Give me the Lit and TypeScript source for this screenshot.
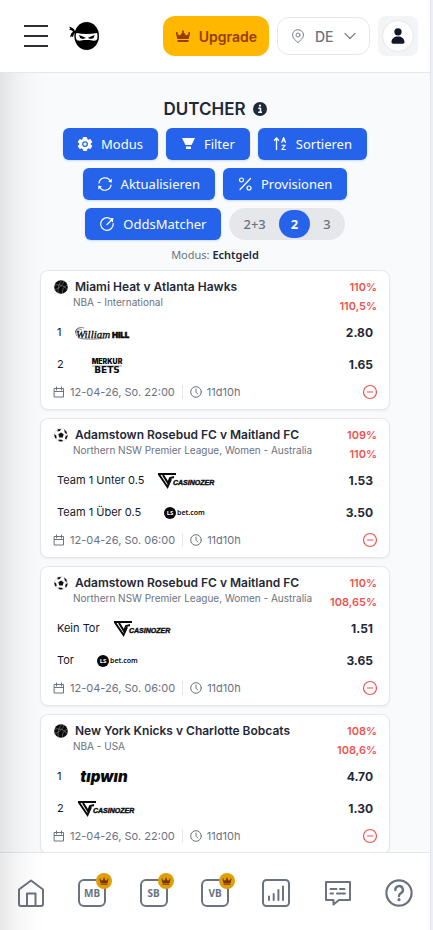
import { LitElement, html, css, svg } from "lit";
import { customElement, property, state } from "lit/decorators.js";
import { classMap } from "lit/directives/class-map.js";

type Brand = "williamhill" | "merkur" | "casinozer" | "lsbet" | "tipwin";
interface Leg { label: string; brand: Brand; odds: string; }
interface Match {
  sport: "basketball" | "soccer";
  title: string;
  league: string;
  ratings: [string, string];
  legs: Leg[];
  date: string;
  left: string;
}

const matches: Match[] = [
  {
    sport: "basketball", title: "Miami Heat v Atlanta Hawks", league: "NBA - International",
    ratings: ["110%", "110,5%"],
    legs: [{ label: "1", brand: "williamhill", odds: "2.80" }, { label: "2", brand: "merkur", odds: "1.65" }],
    date: "12-04-26, So. 22:00", left: "11d10h",
  },
  {
    sport: "soccer", title: "Adamstown Rosebud FC v Maitland FC", league: "Northern NSW Premier League, Women - Australia",
    ratings: ["109%", "110%"],
    legs: [{ label: "Team 1 Unter 0.5", brand: "casinozer", odds: "1.53" }, { label: "Team 1 Über 0.5", brand: "lsbet", odds: "3.50" }],
    date: "12-04-26, So. 06:00", left: "11d10h",
  },
  {
    sport: "soccer", title: "Adamstown Rosebud FC v Maitland FC", league: "Northern NSW Premier League, Women - Australia",
    ratings: ["110%", "108,65%"],
    legs: [{ label: "Kein Tor", brand: "casinozer", odds: "1.51" }, { label: "Tor", brand: "lsbet", odds: "3.65" }],
    date: "12-04-26, So. 06:00", left: "11d10h",
  },
  {
    sport: "basketball", title: "New York Knicks v Charlotte Bobcats", league: "NBA - USA",
    ratings: ["108%", "108,6%"],
    legs: [{ label: "1", brand: "tipwin", odds: "4.70" }, { label: "2", brand: "casinozer", odds: "1.30" }],
    date: "12-04-26, So. 22:00", left: "11d10h",
  },
];

const icon = (size: number, body: unknown, box = `0 0 ${size} ${size}`) =>
  html`<svg width=${size} height=${size} viewBox=${box} fill="none" stroke="currentColor" stroke-linecap="round" stroke-linejoin="round" aria-hidden="true">${body}</svg>`;

const crown = svg`<path stroke="none" fill="currentColor" d="M.8 5a1 1 0 1 1 1.500.9L5 7.600 7.300 4.300a1.100 1.100 0 1 1 1.400 0L11 7.600l2.700-1.700a1 1 0 1 1 1.500-.9L13.600 11H2.400zM2.400 12h11.200v1a1 1 0 0 1-1 1H3.400a1 1 0 0 1-1-1z"/>`;

const icons = {
  menu: icon(24, svg`<path stroke-width="2" stroke-linecap="butt" d="M0 2h24M0 12h24M0 22h24"/>`),
  crown: icon(16, crown),
  pin: icon(14, svg`<path d="M7 13.500C4.600 11.500 1.500 9 1.500 6a5.500 5.300 0 0 1 11 0C12.500 9 9.400 11.500 7 13.500z"/><circle cx="7" cy="6" r="2"/>`),
  chevron: icon(12, svg`<path stroke-width="1.200" d="M1 3.500l5 5 5-5"/>`),
  person: icon(16, svg`<g fill="currentColor" stroke="none"><circle cx="8" cy="4.300" r="4.100"/><path d="M.7 16c0-4 3.300-6.300 7.300-6.300s7.300 2.300 7.300 6.300c0 1.100-.8 1.600-2 1.600H2.700c-1.200 0-2-.5-2-1.600z"/></g>`, "0 0 16 18"),
  info: icon(14, svg`<circle cx="7" cy="7" r="7" fill="currentColor" stroke="none"/><circle cx="7" cy="3.700" r="1.100" fill="#fff" stroke="none"/><path stroke="#fff" stroke-width="1.500" stroke-linecap="butt" d="M5.300 6.300h2.200v4M5.200 10.300h3.800"/>`),
  gear: icon(16, svg`<path fill="currentColor" stroke-width="1" d="M6.500 1.500h3l.5 2 1.300.7 2-.6 1.500 2.600L13.300 7.600v1l1.500 1.300-1.500 2.600-2-.6-1.300.8-.5 1.800h-3L6 12.700l-1.300-.8-2 .6-1.500-2.600 1.500-1.300v-1L1.200 6.200l1.500-2.600 2 .6L6 3.500z"/><circle cx="8" cy="8.100" r="2.300" stroke="#2563eb" stroke-width="1.300"/>`),
  filter: icon(16, svg`<path fill="currentColor" stroke="none" d="M2 2h13l-3.500 7H5.500zM6 10.400h5V13H6z"/>`),
  sort: icon(16, svg`<path stroke-width="1.300" d="M4.500 13.500V2M2.500 4.200L4.500 2l2 2.200"/><path stroke-width="1.100" d="M9.700 6.500l1.900-5 1.900 5M10.300 5h2.600M9.900 9.200h3.300l-3.300 4.300h3.500"/>`),
  refresh: icon(16, svg`<path stroke-width="1.200" d="M2 7A6 6 0 0 1 13.400 5.300M14 9.200A6 6 0 0 1 2.700 10.900"/><path fill="currentColor" stroke="none" d="M14.800 2.600v4l-3.600-.8zM1.300 13.600v-4l3.600.8z"/>`),
  percent: icon(16, svg`<path stroke-width="1.200" d="M3 13.500L13.500 2.500"/><circle cx="4.500" cy="4" r="2" stroke-width="1.200"/><circle cx="12" cy="12" r="2" stroke-width="1.200"/>`),
  meter: icon(16, svg`<path stroke-width="1.200" d="M10.500 2.300A6.300 6.300 0 1 0 14.200 7.500M8 8.500L13.400 3.200M10.700 2.800l3-.2-.3 3"/>`),
  calendar: icon(12, svg`<path stroke-width="1" stroke-linejoin="miter" d="M1.500 2.500h9v8.500h-9zM1.500 5.500h9M3.500 1v3M8.500 1v3"/>`),
  clock: icon(12, svg`<circle cx="6" cy="6" r="5.300"/><path d="M6 3v3.200l1.800 1.800"/>`),
  minus: icon(16, svg`<circle cx="8" cy="8" r="6.500" stroke-width="1.200"/><path stroke-width="1.600" opacity=".7" d="M5.500 8h5"/>`),
  basketball: icon(14, svg`<circle cx="7" cy="7" r="6.800" fill="#0a0a0a" stroke="none"/><g stroke="#8b8b8b" stroke-width=".6"><path d="M1 9.600C5 8.500 9 5 10 1M.6 5.200C5 4 10 5.500 13.200 9.600M4.200 13C3.600 8.500 4.500 4 7.500.6M8.500 13.400C8 9.500 9.500 6.500 13.300 5.200"/></g>`),
  soccer: icon(14, svg`<circle cx="7" cy="7" r="6.500" fill="#fff" stroke="#c8c8c8" stroke-width=".6"/><g fill="#111" stroke="none"><path d="M7 4.500l2.700 1.800-1 3.200H5.300l-1-3.200zM3.800 1.300L7 1 5.900 3 3.400 3.400zM10.200 1.300l2.400 2.500.2 2.400-2-1.500zM.4 6l1.900 1.600.4 2.600-1.500.1C.6 9 .3 7.500.4 6zM13.600 7.300c0 1.600-.6 3-1.400 4.100l-1.200-1 .7-2.500zM4.500 11.400l3.200.4 1.500 1.300c-1.700.7-3.200.6-4.500 0z"/></g>`),
  home: icon(28, svg`<path stroke-width="2" d="M2 10.500L14 1.500l12 9V25a2 2 0 0 1-2 2H4a2 2 0 0 1-2-2zM10 27V14.500h8.500V27"/>`),
  stats: icon(28, svg`<rect x="1" y="1" width="26" height="26" rx="3.500" stroke-width="2"/><path stroke-width="2" d="M7 17.500v3.500M11.700 15v6M16.400 11v10M21 7.500V21"/>`),
  chat: icon(28, svg`<path stroke-width="2" stroke-linejoin="round" d="M2 3h24v18H15l-5.500 4.500V21H2z"/><path stroke-width="2" d="M6.500 10h6M16 10h4.500M6.500 14.500h2.500M13 14.500h8"/>`),
  help: icon(28, svg`<circle cx="14" cy="14" r="12.600" stroke-width="2.200"/><path stroke-width="2.400" d="M10.300 11a3.800 3.800 0 1 1 5.800 3.100c-1.400.9-2.100 1.500-2.100 3"/><circle cx="14" cy="20.700" r="1.600" fill="currentColor" stroke="none"/>`),
};

const ninja = html`<svg width="30" height="28" viewBox="0 0 90 84" role="img" aria-label="Ninja">
  <ellipse cx="53" cy="42" rx="37" ry="42"/>
  <path d="M18 28C16 20 9 15 0 14l4 6-4 4c6 0 9 1 12 5-5 3-7 8-9 17l6-3 3 3c1-7 3-11 8-15z"/>
  <path fill="#fff" d="M22 33c20 4 42 4 62 0 3 8 2 18-2 22-8 3-18-1-25-1h-8c-7 0-16 4-25 1-4-5-5-14-2-22z"/>
  <path d="M30 39l20 8c-3 5-14 4-17 0zM77 39l-20 8c3 5 14 4 17 0z"/>
</svg>`;

@customElement("brand-logo")
class BrandLogo extends LitElement {
  @property() brand: Brand = "tipwin";
  static styles = css`
    :host { display: block; width: 60px; height: 20px; }
    svg { display: block; }
    .script { font: italic 400 11px "Liberation Serif", serif; stroke: #0a0a0a; stroke-width: 0.3px; }
    .heavy { font: 900 8px Inter, sans-serif; stroke: #0a0a0a; stroke-width: 0.5px; }
    .merkur { font: 900 7px Inter, sans-serif; }
    .bets { font: 700 9px "DejaVu Sans", sans-serif; }
    .slant { font: italic 900 7px "Liberation Sans", sans-serif; stroke: #0a0a0a; stroke-width: 0.4px; }
    .round { font: 700 6px "Noto Sans", sans-serif; }
    .small { font: 600 7px "Noto Sans", sans-serif; }
    .tipwin { font: italic 900 15px Inter, sans-serif; }
  `;
  private art() {
    switch (this.brand) {
      case "williamhill":
        return svg`<path d="M3 14C-1 8 4 4 10 6M5 16c8 2 18 1 27 0M2 11C1 7 5 6 8 8" fill="none" stroke="#333" stroke-width=".6"/>
          <text class="script" x="2" y="16">William</text><text class="heavy" x="38" y="16">HILL</text>`;
      case "merkur":
        return svg`<rect x="15" y="11" width="30" height="2" fill="#ccc"/><text class="merkur" x="30" y="10" text-anchor="middle">MERKUR</text>
          <text class="bets" x="30" y="19" text-anchor="middle">BETS</text>`;
      case "casinozer":
        return svg`<g fill="none" stroke="#0a0a0a" stroke-width="2"><path d="M1 4h18M2 4.500l8.500 12.500L14 9M6 5l5 8 2-5 4-1"/></g>
          <text class="slant" x="16" y="15">CASINOZER</text>`;
      case "lsbet":
        return svg`<circle cx="16" cy="11" r="6"/><text class="round" x="16" y="13" fill="#fff" text-anchor="middle">LS</text>
          <text class="small" x="23" y="13">bet.com</text>`;
      default:
        return svg`<text class="tipwin" x="30" y="16" text-anchor="middle">tıpwın</text>`;
    }
  }
  render() {
    return html`<svg width="60" height="20" viewBox="0 0 60 20" fill="#0a0a0a" aria-hidden="true">${this.art()}</svg>`;
  }
}

@customElement("match-card")
class MatchCard extends LitElement {
  @property({ attribute: false }) match!: Match;
  static styles = css`
    :host { display: block; }
    .card { border: 1px solid #e5e7eb; border-radius: 8px; background: #fff; box-shadow: 0 1px 2px rgba(0, 0, 0, 0.06); padding: 5px 12px; }
    .head { display: flex; justify-content: space-between; height: 40px; }
    .event { display: flex; align-items: center; gap: 7px; padding-left: 1px; line-height: 22px; }
    h2 { margin: 0; font-size: 12px; font-weight: 600; color: #1f2937; }
    .league { margin: 0 0 0 20px; font-size: 10px; line-height: 9px; color: #6b7280; }
    .ratings { display: flex; flex-direction: column; align-items: flex-end; font-size: 11px; line-height: 19px; font-weight: 600; color: #ef5350; padding-top: 2px; }
    .leg { display: flex; align-items: center; height: 32px; padding: 0 4px; gap: 13px; }
    .label { font-size: 11px; color: #111827; line-height: 16px; padding-bottom: 1px; }
    .odds { margin-left: auto; font-size: 12px; font-weight: 700; color: #1f2937; padding-top: 1px; }
    .foot { display: flex; align-items: center; height: 24px; color: #6b7280; font-size: 11px; gap: 5px; }
    .rule { width: 1px; height: 14px; background: #e5e7eb; margin: 0 2px; }
    button { margin-left: auto; display: flex; padding: 0; border: 0; background: none; color: #ef5350; margin-right: -1px; }
    svg { display: block; flex: none; }
  `;
  render() {
    const m = this.match;
    return html`<article class="card">
      <div class="head">
        <div>
          <div class="event">${icons[m.sport]}<h2>${m.title}</h2></div>
          <p class="league">${m.league}</p>
        </div>
        <div class="ratings">${m.ratings.map((r) => html`<span>${r}</span>`)}</div>
      </div>
      ${m.legs.map((l) => html`<div class="leg">
        <span class="label">${l.label}</span>
        <brand-logo .brand=${l.brand}></brand-logo>
        <span class="odds">${l.odds}</span>
      </div>`)}
      <div class="foot">
        ${icons.calendar}<span>${m.date}</span><span class="rule"></span>${icons.clock}<span>${m.left}</span>
        <button type="button" aria-label="Ausblenden">${icons.minus}</button>
      </div>
    </article>`;
  }
}

@customElement("app-root")
class AppRoot extends LitElement {
  @state() private legs = "2";
  static styles = css`
    :host { display: block; height: 100vh; background: #edf0f7; font-family: Inter, sans-serif; color: #1f2937; }
    * { box-sizing: border-box; }
    svg { display: block; flex: none; }
    button { font: inherit; border: 0; padding: 0; cursor: pointer; }
    .frame { display: flex; flex-direction: column; height: 100%; margin-right: 2px; border-right: 1px solid #dfe3ea; background: #fff; }
    header { display: flex; align-items: center; gap: 8px; padding: 16px 12px 16px 24px; border-bottom: 1px solid #e5e7eb; }
    .menu { background: none; color: #2d2f33; }
    .logo { margin-left: 13px; margin-right: auto; }
    .upgrade { display: flex; align-items: center; gap: 8px; height: 40px; padding: 0 12px; border-radius: 12px; background: #ffb700; color: #973c00; font-size: 14px; font-weight: 600; }
    .country { display: flex; align-items: center; height: 38px; padding: 0 13px; border: 1px solid #e5e7eb; border-radius: 12px; color: #7b8290; }
    .country select { appearance: none; border: 0; background: none; font: 500 14px Inter, sans-serif; color: #6b7280; padding: 0; margin: 0 9px 0 10px; width: 20px; }
    .avatar { display: grid; place-items: center; width: 40px; height: 40px; border-radius: 8px; background: #f3f4f6; color: #111827; }
    .face { display: grid; place-items: center; width: 32px; height: 32px; border-radius: 50%; border: 1px solid #e5e7eb; background: #fff; }
    .body { position: relative; flex: 1; min-height: 0; display: flex; flex-direction: column; }
    .body::after { content: ""; position: absolute; inset: 0 auto 0 0; width: 44px; pointer-events: none; background: linear-gradient(to right, rgba(0, 0, 0, 0.09), rgba(0, 0, 0, 0.04) 36%, rgba(0, 0, 0, 0.01) 72%, transparent); }
    main { flex: 1; min-height: 0; overflow-y: auto; scrollbar-width: none; background: #f8fafc; padding: 24px 40px 0; }
    .title { display: flex; justify-content: center; align-items: center; gap: 7px; height: 23px; }
    h1 { margin: 0; font-size: 17px; font-weight: 600; line-height: 22px; }
    .tools { display: flex; flex-wrap: wrap; justify-content: center; gap: 8px; margin-top: 8px; }
    .tool { display: flex; align-items: center; gap: 8px; height: 32px; padding: 0 15px 0 14px; border-radius: 6px; background: #2563eb; color: #fff; font: 400 13px "Noto Sans", sans-serif; box-shadow: 0 1px 2px rgba(37, 99, 235, 0.2); }
    .switch { display: flex; align-items: center; gap: 1px; height: 32px; padding: 0 2px; border-radius: 16px; background: #e5e7eb; }
    .switch button { height: 28px; padding: 0 12px; border-radius: 14px; background: none; color: #6b7280; font: 500 13px "Noto Sans", sans-serif; }
    .switch .on { background: #2563eb; color: #fff; font-weight: 700; }
    .mode { margin: 6px 0; text-align: center; font: 400 11px/18px "Noto Sans", sans-serif; color: #6b7280; }
    .mode b { font-weight: 600; color: #1f2937; }
    .list { display: grid; gap: 8px; }
    nav { display: grid; grid-template-columns: repeat(7, 1fr); height: 78px; padding-top: 2px; border-top: 1px solid #e5e7eb; background: #fff; }
    nav a { display: grid; place-items: center; color: #6b7280; text-decoration: none; }
    .tile { position: relative; display: grid; place-items: center; width: 28px; height: 28px; border: 2px solid #6b7280; border-radius: 6px; font: 700 10px "Noto Sans", sans-serif; }
    .badge { position: absolute; top: -8px; right: -8px; display: grid; place-items: center; width: 16px; height: 16px; border-radius: 50%; background: #e09f06; color: #78350f; }
  `;
  private tool(i: unknown, label: string) {
    return html`<button type="button" class="tool">${i}${label}</button>`;
  }
  private tile(label: string) {
    return html`<a href="#${label}"><span class="tile">${label}<span class="badge">${icon(10, crown, "0 0 16 16")}</span></span></a>`;
  }
  render() {
    return html`<div class="frame">
      <header>
        <button type="button" class="menu" aria-label="Menü">${icons.menu}</button>
        <span class="logo">${ninja}</span>
        <button type="button" class="upgrade">${icons.crown}Upgrade</button>
        <label class="country">${icons.pin}<select aria-label="Land"><option>DE</option></select>${icons.chevron}</label>
        <button type="button" class="avatar" aria-label="Profil"><span class="face">${icons.person}</span></button>
      </header>
      <div class="body">
        <main>
          <div class="title"><h1>DUTCHER</h1>${icons.info}</div>
          <div class="tools">
            ${this.tool(icons.gear, "Modus")}${this.tool(icons.filter, "Filter")}${this.tool(icons.sort, "Sortieren")}
            ${this.tool(icons.refresh, "Aktualisieren")}${this.tool(icons.percent, "Provisionen")}${this.tool(icons.meter, "OddsMatcher")}
            <div class="switch" role="group" aria-label="Wetten">
              ${["2+3", "2", "3"].map((v) => html`<button type="button" class=${classMap({ on: v === this.legs })} aria-pressed=${v === this.legs} @click=${() => (this.legs = v)}>${v}</button>`)}
            </div>
          </div>
          <p class="mode">Modus: <b>Echtgeld</b></p>
          <div class="list">${matches.map((m) => html`<match-card .match=${m}></match-card>`)}</div>
        </main>
        <nav>
          <a href="#home" aria-label="Start">${icons.home}</a>
          ${this.tile("MB")}${this.tile("SB")}${this.tile("VB")}
          <a href="#stats" aria-label="Statistik">${icons.stats}</a>
          <a href="#chat" aria-label="Chat">${icons.chat}</a>
          <a href="#help" aria-label="Hilfe">${icons.help}</a>
        </nav>
      </div>
    </div>`;
  }
}
